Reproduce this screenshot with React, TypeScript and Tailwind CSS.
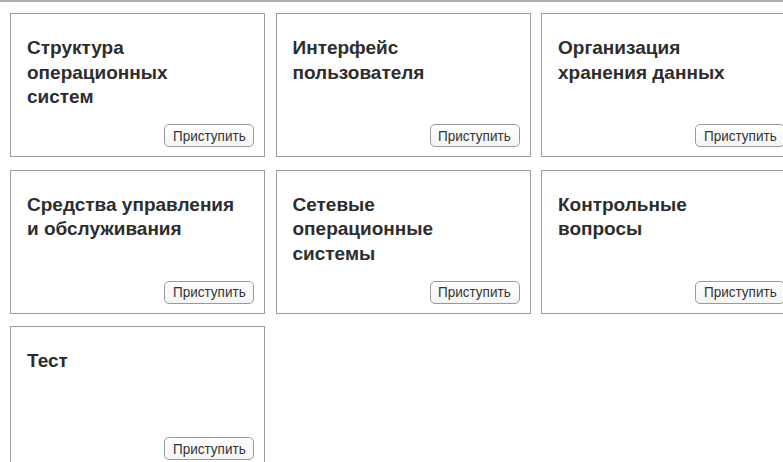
const sections = [
  "Структура операционных систем",
  "Интерфейс пользователя",
  "Организация хранения данных",
  "Средства управления и обслуживания",
  "Сетевые операционные системы",
  "Контрольные вопросы",
  "Тест",
];

function SectionCard({ title }: { title: string }) {
  return (
    <div className="flex h-[144px] w-[255px] flex-col justify-between border border-[#9d9d9d] bg-white pb-[9px] pl-[16px] pr-[10px] pt-[22px]">
      <h3 className="max-w-[212px] text-[19px] font-bold leading-[24.5px] text-[#2d2d2d]">{title}</h3>
      <div className="flex justify-end">
        <button className="flex h-[23px] w-[90px] items-center justify-center rounded-[5px] border border-[#9a9a9a] bg-gradient-to-b from-white to-[#f4f4f4] font-[family-name:Liberation_Sans,Arial,sans-serif] text-[15px] leading-[20px] text-[#333]">
          <span className="inline-block scale-x-[0.9]">Приступить</span>
        </button>
      </div>
    </div>
  );
}

export default function App() {
  return (
    <div className="h-[462px] w-[783px] overflow-hidden bg-white font-[family-name:Liberation_Sans,Arial,sans-serif]">
      <div className="h-[2px] w-full bg-[#adadad]" />
      <div className="grid w-[820px] grid-cols-[255px_255px_255px] gap-x-[10.5px] gap-y-[12.5px] pl-[10px] pt-[11px]">
        {sections.map((s) => (
          <SectionCard key={s} title={s} />
        ))}
      </div>
    </div>
  );
}
